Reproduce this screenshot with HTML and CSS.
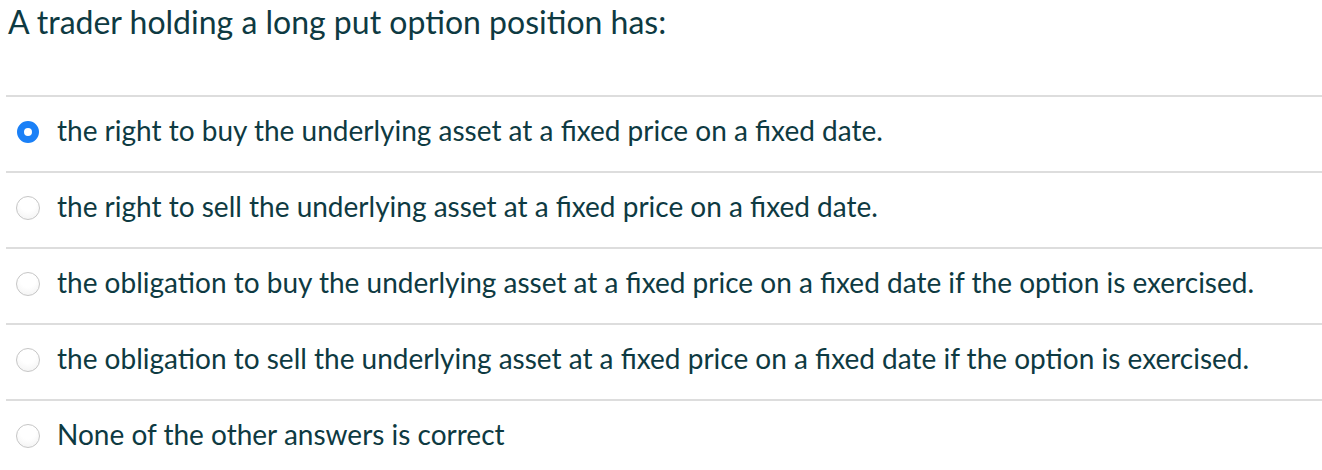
FILE: index.html
```html
<!DOCTYPE html>
<html>
<head>
<meta charset="utf-8">
<link rel="stylesheet" href="styles.css">
</head>
<body>
<div class="question">
  <div class="title">A trader holding a long put option position has:</div>
  <div class="answers">
    <label class="answer"><span class="radio-box"><span class="radio checked"></span></span><span class="text">the right to buy the underlying asset at a fixed price on a fixed date.</span></label>
    <label class="answer"><span class="radio-box"><span class="radio"></span></span><span class="text">the right to sell the underlying asset at a fixed price on a fixed date.</span></label>
    <label class="answer"><span class="radio-box"><span class="radio"></span></span><span class="text">the obligation to buy the underlying asset at a fixed price on a fixed date if the option is exercised.</span></label>
    <label class="answer"><span class="radio-box"><span class="radio"></span></span><span class="text">the obligation to sell the underlying asset at a fixed price on a fixed date if the option is exercised.</span></label>
    <label class="answer"><span class="radio-box"><span class="radio"></span></span><span class="text">None of the other answers is correct</span></label>
  </div>
</div>
</body>
</html>
```
FILE: styles.css
```css
html, body {
  margin: 0;
  padding: 0;
  background: #fff;
}
body {
  font-family: Lato, "Open Sans", sans-serif;
  color: #0e3a42;
}
.question {
  padding-left: 6px;
}
.title {
  font-size: 32px;
  line-height: 38px;
  padding: 3px 0 0 2px;
  height: 95px;
  box-sizing: border-box;
}
.answer {
  display: flex;
  align-items: center;
  height: 76px;
  border-top: 2px solid #dddddd;
  box-sizing: border-box;
  padding: 0 0 5px 10px;
}
.radio-box {
  width: 24px;
  height: 24px;
  display: flex;
  align-items: center;
  justify-content: center;
  flex: none;
  margin-right: 17px;
}
.radio {
  width: 24px;
  height: 24px;
  border-radius: 50%;
  border: 1px solid #c6c6c6;
  box-sizing: border-box;
  background: radial-gradient(circle at 50% 30%, #ffffff 40%, #f0f0f0 100%);
}
.radio.checked {
  width: 22px;
  height: 22px;
  border: 7px solid #1a80f7;
  background: #fff;
}
.text {
  font-size: 28px;
  line-height: 34px;
  margin-bottom: 4px;
}
```
